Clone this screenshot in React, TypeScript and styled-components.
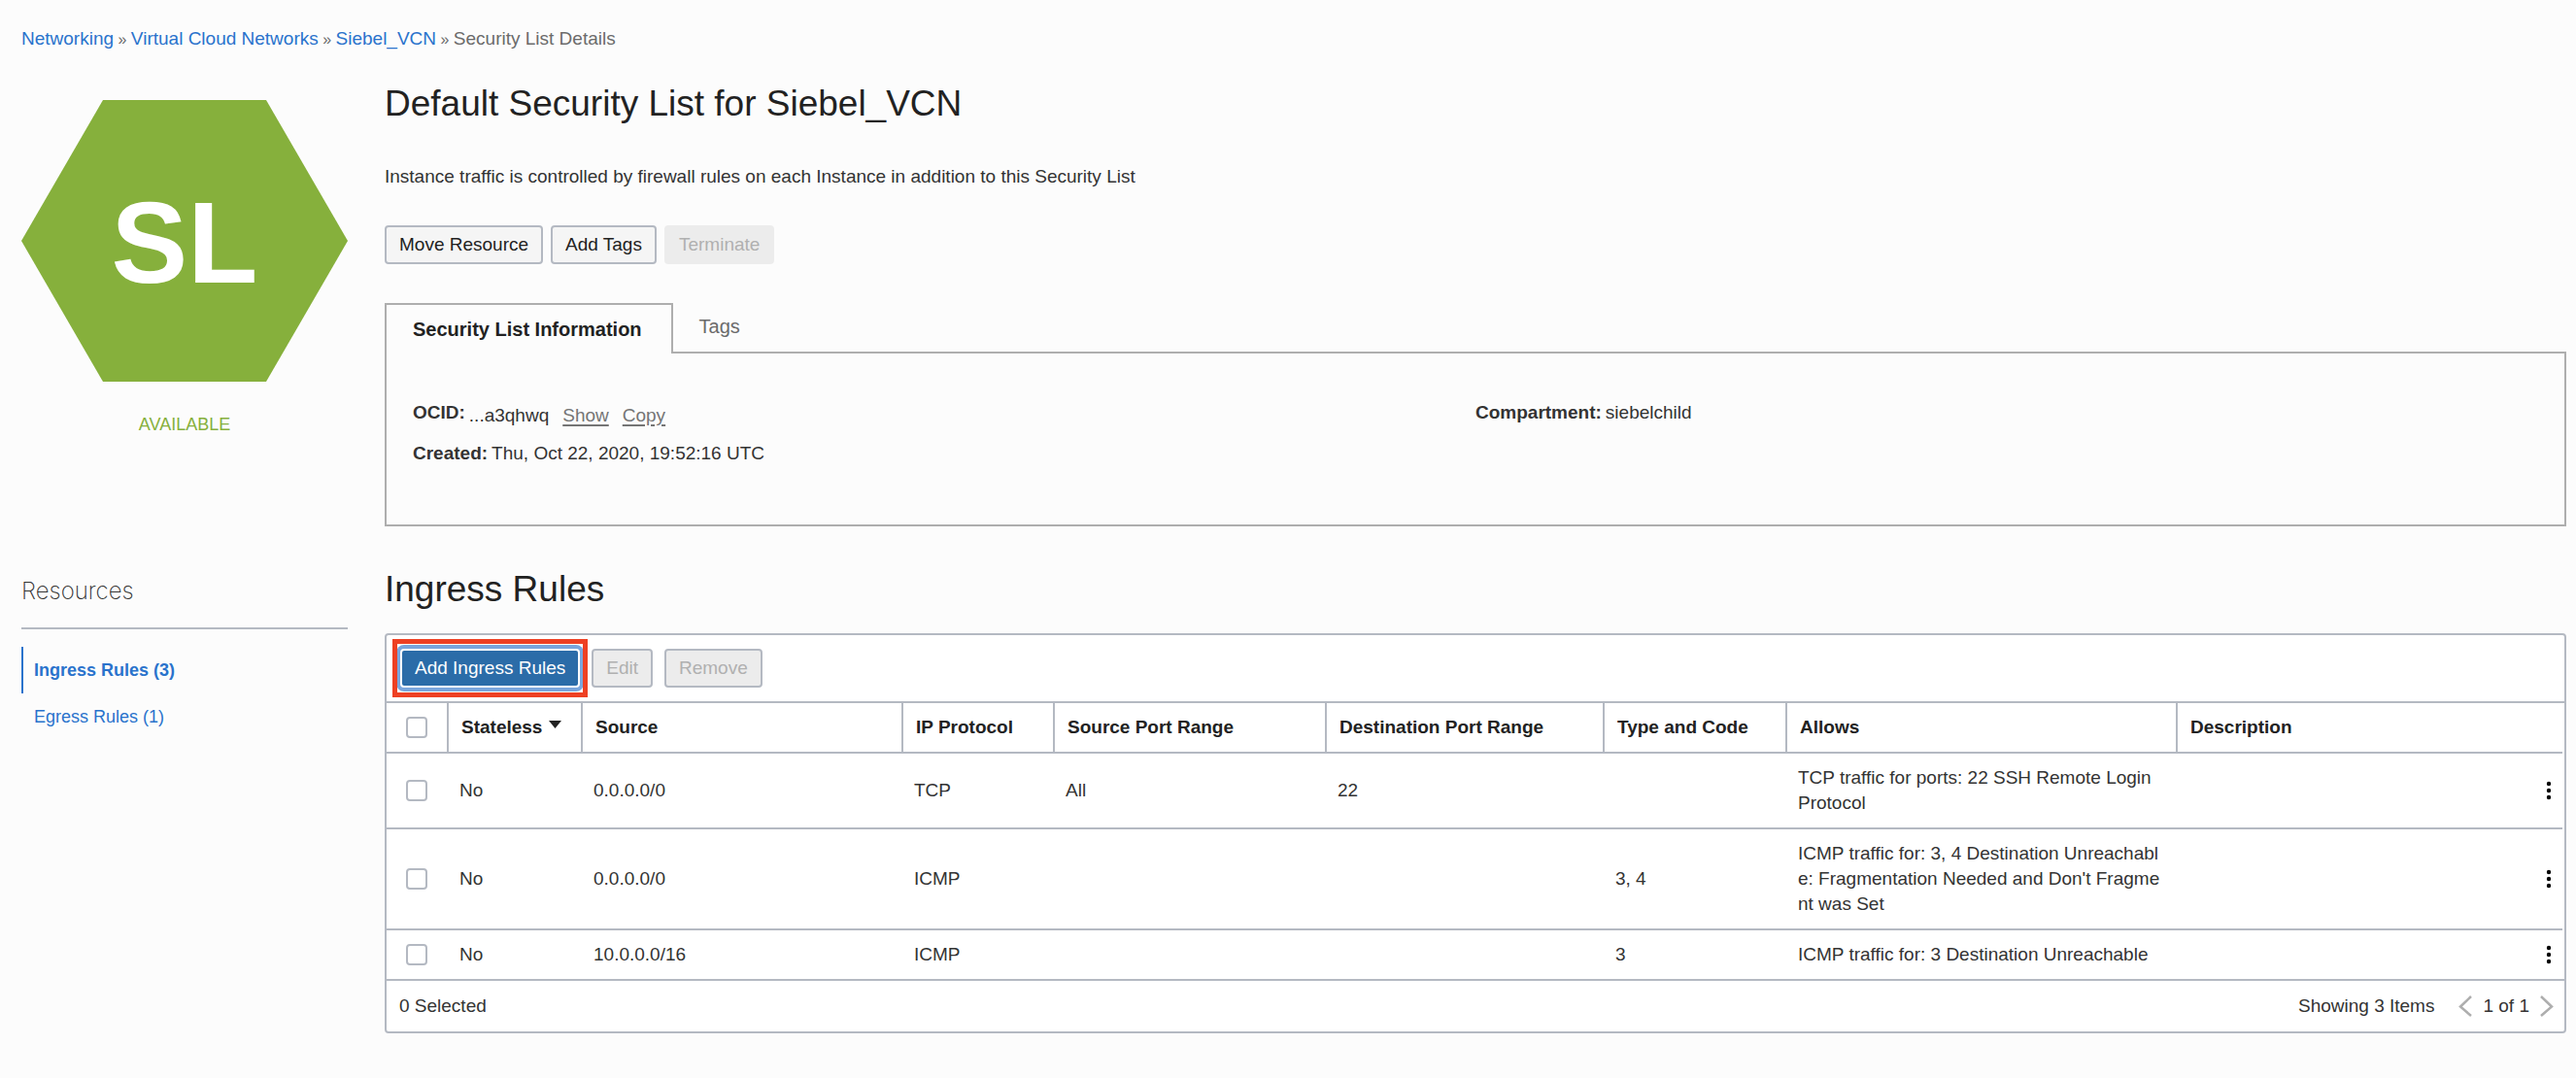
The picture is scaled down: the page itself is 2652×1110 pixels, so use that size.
import React from "react";
import styled, { createGlobalStyle, css } from "styled-components";

const GlobalStyle = createGlobalStyle`
  *, *::before, *::after { box-sizing: border-box; }
  body {
    margin: 0;
    background: #fcfcfc;
    color: #333333;
    font-family: "Liberation Sans", Arial, sans-serif;
    font-size: 19px;
    line-height: 26px;
  }
  h1, h2, p, ul, dl, dd { margin: 0; padding: 0; }
  ul { list-style: none; }
`;

const Page = styled.div`
  padding: 27px 10px 40px 22px;
`;

const Breadcrumb = styled.nav`
  color: #6b6b6b;
`;

const Separator = styled.span`
  font-size: 16px;
  line-height: 16px;
  white-space: pre;
`;

const Link = styled.a`
  color: #2a73cc;
  text-decoration: none;
`;

const Columns = styled.div`
  display: grid;
  grid-template-columns: 336px minmax(0, 1fr);
  column-gap: 38px;
`;

const Side = styled.aside`
  padding-top: 50px;
  font-size: 18px;
`;

const StatusIcon = styled.svg`
  display: block;
  width: 336px;
  height: 290px;
`;

const Status = styled.p`
  margin-top: 31px;
  text-align: center;
  color: #86b03c;
`;

const ResourcesTitle = styled.h2`
  margin-top: 143px;
  padding-bottom: 21px;
  border-bottom: 2px solid #b4b9c2;
  font-family: "Inter", "Liberation Sans", sans-serif;
  font-size: 24px;
  font-weight: 200;
  line-height: 32px;
`;

const ResourceList = styled.ul`
  margin-top: 18px;
`;

const ResourceItem = styled.li<{ $active?: boolean }>`
  padding: 11px;
  border-left: 2px solid ${(p) => (p.$active ? "#2a73cc" : "transparent")};
  font-weight: ${(p) => (p.$active ? 700 : 400)};
`;

const Main = styled.main`
  padding-top: 30px;
`;

const Title = styled.h1`
  color: #222222;
  font-size: 37px;
  font-weight: 400;
  line-height: 48px;
`;

const SectionTitle = styled(Title).attrs({ as: "h2" })`
  margin-top: 41px;
`;

const Lead = styled.p`
  margin-top: 38px;
`;

const ButtonRow = styled.div`
  display: flex;
  gap: 8px;
  margin-top: 37px;
`;

const Button = styled.button<{ $flat?: boolean }>`
  height: 40px;
  padding: 0 13px;
  border: 2px solid ${(p) => (p.$flat ? "#ececec" : "#b4b9c2")};
  border-radius: 4px;
  background: #f5f5f5;
  color: #222222;
  font: inherit;
  &:disabled {
    background: #ececec;
    color: #b0b0b0;
  }
`;

const PrimaryButton = styled(Button)`
  border-color: #ffffff;
  background: #2b6ca8;
  color: #ffffff;
  box-shadow: 0 0 0 4px #7aa5dc;
`;

const Highlight = styled.div`
  position: relative;
  display: flex;
  &::after {
    content: "";
    position: absolute;
    inset: -10px -8px;
    border: 5px solid #ee4023;
    pointer-events: none;
  }
`;

const Tabs = styled.div`
  display: flex;
  margin-top: 40px;
`;

const Tab = styled.button<{ $active?: boolean }>`
  height: 52px;
  padding: 0 27px 4px;
  border: 0;
  background: none;
  color: #6b6b6b;
  font: inherit;
  font-size: 20px;
  ${(p) =>
    p.$active &&
    css`
      z-index: 1;
      padding: 0 30px 0 27px;
      border: 2px solid #aeaeae;
      border-bottom: 0;
      background: #fcfcfc;
      color: #222222;
      font-weight: 700;
    `}
`;

const Panel = styled.section`
  display: grid;
  grid-template-columns: 1fr 1fr;
  margin-top: -2px;
  min-height: 180px;
  padding: 48px 27px;
  border: 2px solid #aeaeae;
`;

const Details = styled.dl`
  display: grid;
  align-content: start;
  row-gap: 16px;
`;

const Detail = styled.div`
  display: flex;
  column-gap: 4px;
`;

const Term = styled.dt`
  font-weight: 700;
`;

const Value = styled.dd<{ $low?: boolean }>`
  display: flex;
  column-gap: 14px;
  padding-top: ${(p) => (p.$low ? 3 : 0)}px;
  height: 26px;
`;

const ActionLink = styled.a`
  color: #757575;
  text-decoration: underline;
  text-decoration-thickness: 2px;
  text-underline-offset: 3px;
`;

const TableFrame = styled.section`
  margin-top: 21px;
  border: 2px solid #b4b9c2;
  border-radius: 4px;
  background: #ffffff;
`;

const Toolbar = styled.div`
  display: flex;
  gap: 12px;
  padding: 14px;
  border-bottom: 2px solid #b4b9c2;
`;

const TableWrap = styled.div`
  padding-right: 2px;
`;

const Table = styled.table`
  width: 100%;
  table-layout: fixed;
  border-collapse: separate;
  border-spacing: 0;
`;

const HeadCell = styled.th`
  padding: 12px 13px;
  border-bottom: 2px solid #b4b9c2;
  color: #222222;
  font-weight: 700;
  text-align: left;
  white-space: nowrap;
  & + & {
    border-left: 2px solid #b4b9c2;
  }
  & + &:last-child {
    border-left: 0;
  }
`;

const Cell = styled.td`
  padding: 12px 13px;
  word-break: break-all;
  tbody tr:not(:last-child) & {
    border-bottom: 2px solid #b4b9c2;
  }
`;

const SortIcon = styled.svg`
  width: 13px;
  height: 8px;
  margin-left: 7px;
  vertical-align: 5px;
`;

const Checkbox = styled.input.attrs({ type: "checkbox" })`
  display: block;
  appearance: none;
  width: 22px;
  height: 22px;
  margin: 0 7px;
  border: 2px solid #b4b9c2;
  border-radius: 4px;
  background: #ffffff;
`;

const IconButton = styled.button`
  display: block;
  padding: 0;
  border: 0;
  background: none;
  & svg {
    display: block;
  }
`;

const MenuButton = styled(IconButton)`
  margin-left: 14px;
`;

const Footer = styled.div`
  display: flex;
  justify-content: space-between;
  padding: 13px 11px 13px 13px;
  border-top: 2px solid #b4b9c2;
`;

const Pager = styled.div`
  display: flex;
  align-items: center;
  column-gap: 11px;
`;

const PagerCount = styled.span`
  margin-right: 14px;
`;

const widths = [62, 138, 330, 156, 280, 286, 188, 402];

const headings = [
  "Source",
  "IP Protocol",
  "Source Port Range",
  "Destination Port Range",
  "Type and Code",
  "Allows",
  "Description",
];

const rules = [
  ["No", "0.0.0.0/0", "TCP", "All", "22", "", "TCP traffic for ports: 22 SSH Remote Login Protocol", ""],
  [
    "No",
    "0.0.0.0/0",
    "ICMP",
    "",
    "",
    "3, 4",
    "ICMP traffic for: 3, 4 Destination Unreachable: Fragmentation Needed and Don't Fragment was Set",
    "",
  ],
  ["No", "10.0.0.0/16", "ICMP", "", "", "3", "ICMP traffic for: 3 Destination Unreachable", ""],
];

const Chevron = ({ d }: { d: string }) => (
  <svg width="14" height="22" viewBox="0 0 14 22" fill="none" stroke="#aeaeae" strokeWidth="2.500">
    <path d={d} />
  </svg>
);

export default function App() {
  return (
    <>
      <GlobalStyle />
      <Page>
        <Breadcrumb aria-label="Breadcrumb">
          <Link href="#networking">Networking</Link>
          <Separator> » </Separator>
          <Link href="#vcns">Virtual Cloud Networks</Link>
          <Separator> » </Separator>
          <Link href="#vcn">Siebel_VCN</Link>
          <Separator> » </Separator>
          Security List Details
        </Breadcrumb>
        <Columns>
          <Side>
            <StatusIcon viewBox="0 0 336 290" role="img" aria-label="Security List">
              <polygon points="84,0 252,0 336,145 252,290 84,290 0,145" fill="#86b03c" />
              <text
                x="168"
                y="188"
                textAnchor="middle"
                fill="#ffffff"
                fontFamily="Liberation Sans, Arial, sans-serif"
                fontWeight="700"
                fontSize="118"
              >
                SL
              </text>
            </StatusIcon>
            <Status>AVAILABLE</Status>
            <ResourcesTitle>Resources</ResourcesTitle>
            <ResourceList>
              <ResourceItem $active>
                <Link href="#ingress">Ingress Rules (3)</Link>
              </ResourceItem>
              <ResourceItem>
                <Link href="#egress">Egress Rules (1)</Link>
              </ResourceItem>
            </ResourceList>
          </Side>
          <Main>
            <Title>Default Security List for Siebel_VCN</Title>
            <Lead>Instance traffic is controlled by firewall rules on each Instance in addition to this Security List</Lead>
            <ButtonRow>
              <Button>Move Resource</Button>
              <Button>Add Tags</Button>
              <Button $flat disabled>
                Terminate
              </Button>
            </ButtonRow>
            <Tabs role="tablist">
              <Tab role="tab" aria-selected="true" $active>
                Security List Information
              </Tab>
              <Tab role="tab" aria-selected="false">
                Tags
              </Tab>
            </Tabs>
            <Panel>
              <Details>
                <Detail>
                  <Term>OCID:</Term>
                  <Value $low>
                    <span>...a3qhwq</span>
                    <ActionLink href="#show">Show</ActionLink>
                    <ActionLink href="#copy">Copy</ActionLink>
                  </Value>
                </Detail>
                <Detail>
                  <Term>Created:</Term>
                  <Value>Thu, Oct 22, 2020, 19:52:16 UTC</Value>
                </Detail>
              </Details>
              <Details>
                <Detail>
                  <Term>Compartment:</Term>
                  <Value>siebelchild</Value>
                </Detail>
              </Details>
            </Panel>
            <SectionTitle>Ingress Rules</SectionTitle>
            <TableFrame>
              <Toolbar>
                <Highlight>
                  <PrimaryButton>Add Ingress Rules</PrimaryButton>
                </Highlight>
                <Button disabled>Edit</Button>
                <Button disabled>Remove</Button>
              </Toolbar>
              <TableWrap>
                <Table>
                  <colgroup>
                    {widths.map((w, i) => (
                      <col key={i} style={{ width: w }} />
                    ))}
                    <col />
                    <col style={{ width: 48 }} />
                  </colgroup>
                  <thead>
                    <tr>
                      <HeadCell>
                        <Checkbox aria-label="Select all rules" />
                      </HeadCell>
                      <HeadCell>
                        Stateless
                        <SortIcon viewBox="0 0 13 8">
                          <path d="M0 0h13L6.500 8z" fill="#222222" />
                        </SortIcon>
                      </HeadCell>
                      {headings.map((h) => (
                        <HeadCell key={h}>{h}</HeadCell>
                      ))}
                      <HeadCell aria-label="Actions" />
                    </tr>
                  </thead>
                  <tbody>
                    {rules.map((rule, i) => (
                      <tr key={i}>
                        <Cell>
                          <Checkbox aria-label={`Select rule ${i + 1}`} />
                        </Cell>
                        {rule.map((value, j) => (
                          <Cell key={j}>{value}</Cell>
                        ))}
                        <Cell>
                          <MenuButton aria-label="Rule actions">
                            <svg width="14" height="20" viewBox="0 0 14 20" fill="#000000">
                              <circle cx="7" cy="3" r="2.200" />
                              <circle cx="7" cy="10" r="2.200" />
                              <circle cx="7" cy="17" r="2.200" />
                            </svg>
                          </MenuButton>
                        </Cell>
                      </tr>
                    ))}
                  </tbody>
                </Table>
              </TableWrap>
              <Footer>
                <span>0 Selected</span>
                <Pager>
                  <PagerCount>Showing 3 Items</PagerCount>
                  <IconButton aria-label="Previous page">
                    <Chevron d="M13 1L2 11.500l11 9.500" />
                  </IconButton>
                  <span>1 of 1</span>
                  <IconButton aria-label="Next page">
                    <Chevron d="M1 1l11 10.500L1 21" />
                  </IconButton>
                </Pager>
              </Footer>
            </TableFrame>
          </Main>
        </Columns>
      </Page>
    </>
  );
}
